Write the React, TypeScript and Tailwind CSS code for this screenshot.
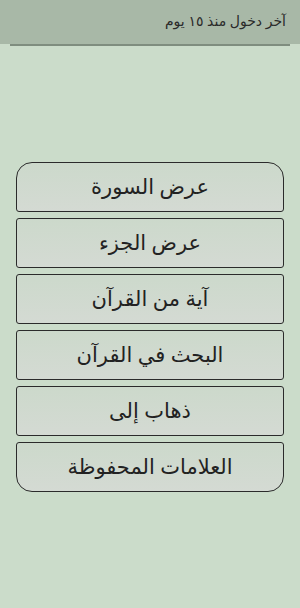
const items = [
  "عرض السورة",
  "عرض الجزء",
  "آية من القرآن",
  "البحث في القرآن",
  "ذهاب إلى",
  "العلامات المحفوظة",
];

export default function App() {
  return (
    <div
      dir="rtl"
      className="w-[300px] h-[608px] bg-[#cbdcca] flex flex-col"
      style={{ fontFamily: '"Noto Sans", "DejaVu Sans", sans-serif' }}
    >
      <div className="h-[44px] bg-[#a8b8a7] flex items-center pb-[4px] px-[14px] text-[14px] text-[#2a2a2a]">
        آخر دخول منذ ١٥ يوم
      </div>
      <div className="mx-[10px] h-[2px] bg-[#7f8d7f]" />
      <div className="flex flex-col gap-[6px] px-[16px] pt-[116px]">
        {items.map((label, i) => (
          <button
            key={label}
            type="button"
            className={
              "h-[50px] border-[1.5px] border-[#2b2b2b] bg-gradient-to-b from-[#ccd9cb] to-[#d4dad3] text-[21px] text-[#222] flex items-center justify-center " +
              (i === 0
                ? "rounded-t-[16px] rounded-b-[3px]"
                : i === items.length - 1
                ? "rounded-b-[16px] rounded-t-[3px]"
                : "rounded-[3px]")
            }
          >
            {label}
          </button>
        ))}
      </div>
    </div>
  );
}
